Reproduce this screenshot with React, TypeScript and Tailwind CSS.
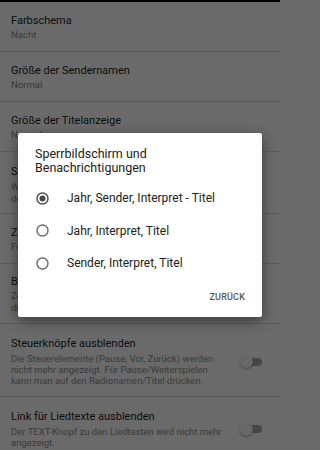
import React from 'react';

const font = { fontFamily: 'Roboto, "Noto Sans", sans-serif' };

function Toggle() {
  return (
    <div className="relative w-[22px] h-[13px] shrink-0">
      <div className="absolute left-[3px] right-0 top-[2.5px] h-[8px] rounded-full bg-[#a6a6a6]" />
      <div className="absolute left-0 top-0 w-[13px] h-[13px] rounded-full bg-[#f7f7f7] shadow-[0_1px_2px_rgba(0,0,0,0.35)]" />
    </div>
  );
}

interface PrefProps {
  title: string;
  lines: string[];
  pad: string;
  descGap?: string;
  descLeading?: string;
  toggle?: boolean;
}

function Pref({ title, lines, pad, descGap = '', descLeading = 'leading-[13px]', toggle }: PrefProps) {
  return (
    <div className={`flex items-center border-b border-[#d8d8d8] pl-[11px] pr-[18px] ${pad}`}>
      <div className="flex-1 min-w-0">
        <div className="text-[11px] leading-[14px] text-[#1c1c1c] whitespace-nowrap">{title}</div>
        <div className={`text-[9.5px] ${descLeading} ${descGap} text-[#8c8c8c] whitespace-nowrap`}>
          {lines.map((l, i) => (
            <div key={i}>{l}</div>
          ))}
        </div>
      </div>
      {toggle && <Toggle />}
    </div>
  );
}

function Radio({ checked }: { checked?: boolean }) {
  return (
    <svg width="13" height="13" viewBox="0 0 13 13" className="shrink-0">
      <circle cx="6.5" cy="6.5" r="5.5" fill="none" stroke={checked ? '#4a4a4a' : '#6a6a6a'} strokeWidth="1.4" />
      {checked && <circle cx="6.5" cy="6.5" r="3" fill="#4a4a4a" />}
    </svg>
  );
}

const options = ['Jahr, Sender, Interpret - Titel', 'Jahr, Interpret, Titel', 'Sender, Interpret, Titel'];

export default function App() {
  return (
    <div className="min-h-screen bg-[#6a6a6a]">
      <div className="relative h-[450px] w-[280px] overflow-hidden bg-[#fcfcfc]" style={font}>
        <div className="h-[2px] bg-black" />
        <Pref title="Farbschema" lines={['Nacht']} pad="pt-[12px] pb-[10px]" />
        <Pref title="Größe der Sendernamen" lines={['Normal']} pad="pt-[12px] pb-[10px]" />
        <Pref title="Größe der Titelanzeige" lines={['Normal']} pad="pt-[12px] pb-[10px]" />
        <Pref
          title="Sperrbildschirm und Benachrichtigungen"
          lines={['Wie die Titelinformationen auf dem Sperrbildschirm und in', 'den Benachrichtigungen angezeigt werden']}
          pad="pt-[13px] pb-[8px]"
          descGap="mt-[2px]"
          descLeading="leading-[12px]"
        />
        <Pref title="Zeitformat" lines={['Format 24 Stunden']} pad="pt-[12px] pb-[10px]" />
        <Pref
          title="Bildschirm nicht ausschalten"
          lines={['Zeigt die Anzeige dauerhaft an, solange', 'die App geöffnet ist.']}
          pad="pt-[11px] pb-[9px]"
          descGap="mt-[1px]"
          descLeading="leading-[12px]"
          toggle
        />
        <Pref
          title="Steuerknöpfe ausblenden"
          lines={[
            'Die Steuerelemente (Pause, Vor, Zurück) werden',
            'nicht mehr angezeigt. Für Pause/Weiterspielen',
            'kann man auf den Radionamen/Titel drücken.',
          ]}
          pad="pt-[13px] pb-[10px]"
          descGap="mt-[2px]"
          descLeading="leading-[11px]"
          toggle
        />
        <Pref
          title="Link für Liedtexte ausblenden"
          lines={['Der TEXT-Knopf zu den Liedtexten wird nicht mehr', 'angezeigt.']}
          pad="pt-[13px] pb-[13px]"
          descGap="mt-[2px]"
          descLeading="leading-[11px]"
          toggle
        />

        <div className="absolute inset-0 bg-black/[0.58]" />

        <div className="absolute left-[18px] top-[133px] w-[244px] rounded-[2px] bg-white shadow-[0_4px_14px_rgba(0,0,0,0.45)]">
          <div className="px-[17px] pt-[14px] text-[12.5px] leading-[14px] text-[#212121]">
            Sperrbildschirm und Benachrichtigungen
          </div>
          <div className="mt-[7px]">
            {options.map((o, i) => (
              <div key={o} className="flex h-[32.5px] items-center pl-[18px]">
                <Radio checked={i === 0} />
                <span className="ml-[18px] text-[12px] text-[#212121] whitespace-nowrap">{o}</span>
              </div>
            ))}
          </div>
          <div className="flex h-[37px] items-center justify-end pr-[17px]">
            <span className="text-[9px] font-medium tracking-[0.02em] text-[#555555]">ZURÜCK</span>
          </div>
        </div>
      </div>
    </div>
  );
}
